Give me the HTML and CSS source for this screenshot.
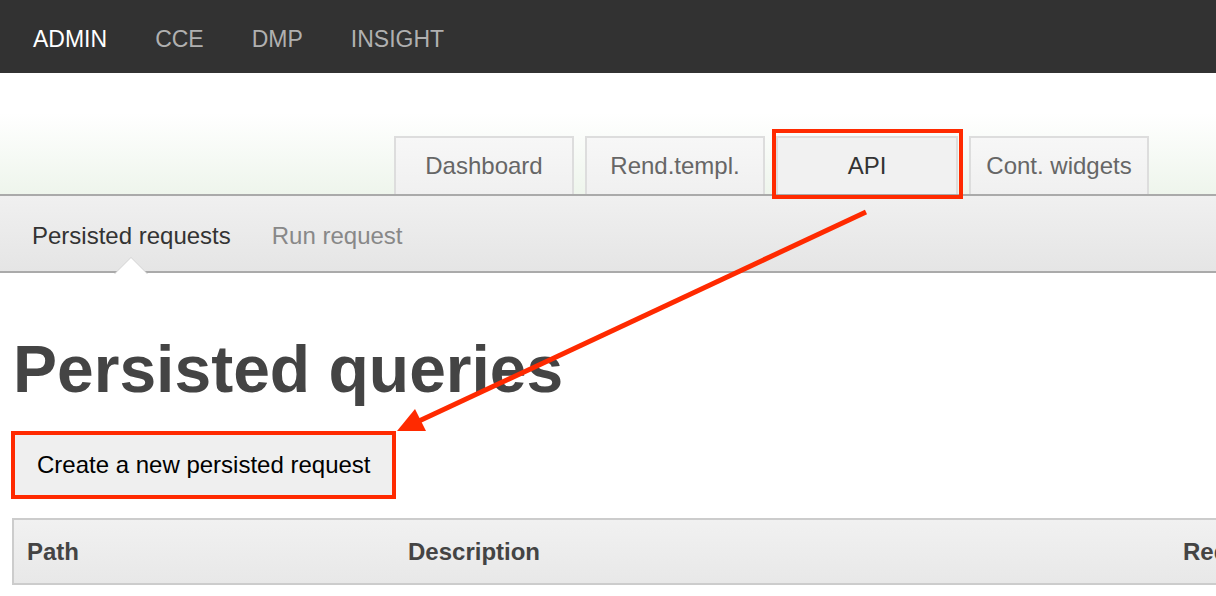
FILE: index.html
```html
<!DOCTYPE html>
<html lang="en">
<head>
  <meta charset="UTF-8">
  <title>Persisted queries</title>
  <link rel="stylesheet" href="styles.css">
</head>
<body>
  <!-- Top Navigation -->
  <header class="topbar">
    <nav class="topnav">
      <a class="topnav-item active">ADMIN</a>
      <a class="topnav-item">CCE</a>
      <a class="topnav-item">DMP</a>
      <a class="topnav-item">INSIGHT</a>
    </nav>
  </header>

  <!-- Section Tabs -->
  <div class="tabs-band">
    <div class="tabs">
      <div class="tab">Dashboard</div>
      <div class="tab">Rend.templ.</div>
      <div class="tab active">API</div>
      <div class="tab">Cont. widgets</div>
    </div>
  </div>

  <!-- Sub Navigation -->
  <div class="subnav">
    <div class="subnav-item active">Persisted requests</div>
    <div class="subnav-item">Run request</div>
  </div>

  <main class="content">
    <h1 class="page-title">Persisted queries</h1>
    <button class="button">Create a new persisted request</button>

    <div class="table-wrap">
      <table class="data-table">
        <thead>
          <tr>
            <th class="col-path">Path</th>
            <th class="col-desc">Description</th>
            <th>Request</th>
          </tr>
        </thead>
      </table>
    </div>
  </main>

  <!-- Annotations -->
  <svg class="annotations" width="1216" height="596" viewBox="0 0 1216 596">
    <rect x="774" y="131" width="187" height="66" fill="none" stroke="#ff2a00" stroke-width="4"/>
    <rect x="13" y="433" width="381" height="64" fill="none" stroke="#ff2a00" stroke-width="4"/>
    <line x1="866" y1="212" x2="419" y2="421" stroke="#ff2a00" stroke-width="5"/>
    <polygon points="397,431 415,409 426,431" fill="#ff2a00"/>
  </svg>
</body>
</html>
```

FILE: styles.css
```css
:root {
  --topbar-bg: #323232;
  --text-dark: #444444;
  --text-muted: #888888;
  --tab-border: #dddddd;
  --bar-border: #aaaaaa;
  --annotation: #ff2a00;
}

html, body {
  margin: 0;
  padding: 0;
  overflow: hidden;
}

body {
  font-family: "Liberation Sans", Arial, Helvetica, sans-serif;
  background-color: #ffffff;
  color: var(--text-dark);
  position: relative;
  width: 1216px;
  height: 596px;
}

.topbar {
  background-color: var(--topbar-bg);
  height: 73px;
  display: flex;
  align-items: center;
}

.topnav {
  display: flex;
  gap: 48px;
  padding-left: 33px;
  padding-top: 6px;
}

.topnav-item {
  font-size: 23px;
  color: #b0b0b0;
}

.topnav-item.active {
  color: #ffffff;
}

.tabs-band {
  height: 121px;
  background: linear-gradient(to bottom, #ffffff 0, #ffffff 40px, #eef5ec 121px);
  display: flex;
  align-items: flex-end;
}

.tabs {
  display: flex;
  gap: 11px;
  margin-left: auto;
  padding-right: 67px;
}

.tab {
  width: 176px;
  height: 56px;
  border: 2px solid var(--tab-border);
  border-bottom: none;
  background: linear-gradient(to bottom, #f7f7f7, #f0f0f0);
  color: #666666;
  font-size: 24px;
  display: flex;
  align-items: center;
  justify-content: center;
}

.tab.active {
  width: 178px;
  color: #333333;
  background: #f1f1f1;
}

.subnav {
  height: 75px;
  border-top: 2px solid var(--bar-border);
  border-bottom: 2px solid var(--bar-border);
  background: linear-gradient(to bottom, #f0f0f0, #e5e5e5);
  display: flex;
  align-items: center;
  gap: 41px;
  padding-left: 32px;
}

.subnav-item {
  font-size: 24px;
  color: var(--text-muted);
  position: relative;
  top: 2px;
}

.subnav-item.active {
  color: #333333;
}

.subnav-item.active::before,
.subnav-item.active::after {
  content: "";
  position: absolute;
  left: 50%;
  margin-left: -17px;
  border-left: 17px solid transparent;
  border-right: 17px solid transparent;
}

.subnav-item.active::before {
  bottom: -24px;
  border-bottom: 17px solid #d4d4d4;
}

.subnav-item.active::after {
  bottom: -25px;
  border-bottom: 17px solid #ffffff;
}

.content {
  padding: 0 0 0 12px;
}

.page-title {
  font-size: 66px;
  line-height: 66px;
  font-weight: bold;
  color: var(--text-dark);
  margin: 63px 0 31px 1px;
}

.button {
  display: block;
  font-family: inherit;
  font-size: 24px;
  line-height: 24px;
  color: #000000;
  background-color: #efefef;
  border: none;
  border-top: 1px solid #666666;
  padding: 19px 23px 20px 24px;
  margin-left: 1px;
  width: 381px;
  text-align: left;
}

.table-wrap {
  margin-top: 21px;
  overflow: hidden;
}

.data-table {
  width: 1400px;
  border-collapse: collapse;
}

.data-table th {
  height: 63px;
  padding: 0 15px;
  text-align: left;
  font-size: 24px;
  font-weight: bold;
  color: var(--text-dark);
  background: linear-gradient(to bottom, #f1f1f1, #e8e8e8);
  border-top: 2px solid #cccccc;
  border-bottom: 2px solid #cccccc;
}

.data-table th:first-child {
  border-left: 2px solid #cccccc;
  padding-left: 13px;
}

.col-path {
  width: 351px;
}

.col-desc {
  width: 745px;
}

.annotations {
  position: absolute;
  left: 0;
  top: 0;
  pointer-events: none;
}
```
